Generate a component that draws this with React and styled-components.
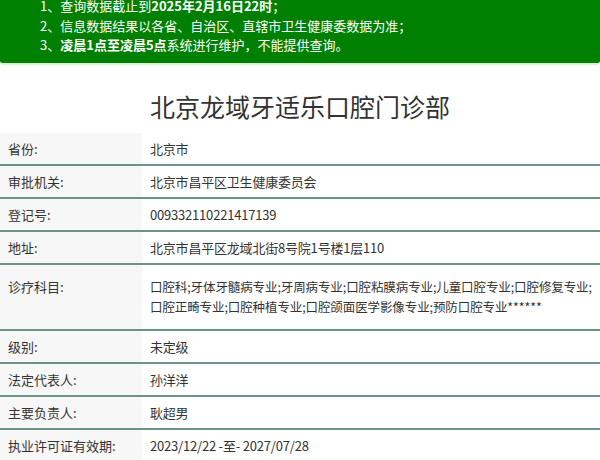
import React from "react";
import styled, { createGlobalStyle } from "styled-components";

const GlobalStyle = createGlobalStyle`
	html, body {
		margin: 0;
		padding: 0;
		background: #fff;
		overflow: hidden;
	}
	body {
		font-family: "Noto Sans CJK SC", "Noto Sans", sans-serif;
		color: #333;
	}
`;

const Page = styled.div`
	width: 600px;
	height: 460px;
	overflow: hidden;
`;

const Notice = styled.div`
	background-color: #008000;
	border-bottom: 2px solid #d6f3d6;
	border-radius: 0 0 4px 4px;
	padding: 0 0 8px 40px;
	color: #fff;
	font-size: 13px;
`;

const NoticeList = styled.ul`
	list-style: none;
	margin: -4px 0 0;
	padding: 0;
`;

const NoticeItem = styled.li`
	line-height: 19.5px;
	white-space: nowrap;
`;

const Title = styled.h1`
	margin: 0;
	padding: 26px 0 12px;
	text-align: center;
	font-size: 25px;
	font-weight: 400;
	line-height: 30px;
	color: #333;
`;

const Table = styled.div`
	display: flex;
	flex-direction: column;
	font-size: 13px;
`;

const Row = styled.div`
	display: grid;
	grid-template-columns: 142px 1fr;
	border-bottom: ${(p) => (p.last ? "none" : "2px solid #6b9486")};
`;

const Label = styled.div`
	background-color: #f7f7f7;
	padding: ${(p) => (p.tall ? "12px 8px" : "6px 8px")};
	line-height: 19px;
	color: #333;
`;

const Value = styled.div`
	padding: ${(p) => (p.tall ? "12px 8px 12px" : "6px 8px")};
	line-height: ${(p) => (p.tall ? "20px" : "19px")};
	font-size: ${(p) => (p.tall ? "12.5px" : "13px")};
	letter-spacing: ${(p) => (p.tall ? "-0.1px" : "-0.2px")};
	color: #333;
`;

const ValueLine = styled.span`
	display: block;
	white-space: nowrap;
`;

const rows = [
	["省份:", ["北京市"]],
	["审批机关:", ["北京市昌平区卫生健康委员会"]],
	["登记号:", ["009332110221417139"]],
	["地址:", ["北京市昌平区龙域北街8号院1号楼1层110"]],
	[
		"诊疗科目:",
		[
			"口腔科;牙体牙髓病专业;牙周病专业;口腔粘膜病专业;儿童口腔专业;口腔修复专业;",
			"口腔正畸专业;口腔种植专业;口腔颌面医学影像专业;预防口腔专业******",
		],
	],
	["级别:", ["未定级"]],
	["法定代表人:", ["孙洋洋"]],
	["主要负责人:", ["耿超男"]],
	["执业许可证有效期:", ["2023/12/22 -至- 2027/07/28"]],
];

const App = () => {
	return (
		<Page>
			<GlobalStyle />
			<Notice>
				<NoticeList>
					<NoticeItem>
						1、查询数据截止到<b>2025年2月16日22时</b>；
					</NoticeItem>
					<NoticeItem>2、信息数据结果以各省、自治区、直辖市卫生健康委数据为准；</NoticeItem>
					<NoticeItem>
						3、<b>凌晨1点至凌晨5点</b>系统进行维护，不能提供查询。
					</NoticeItem>
				</NoticeList>
			</Notice>
			<Title>北京龙域牙适乐口腔门诊部</Title>
			<Table>
				{rows.map(([label, lines], i) => {
					const tall = lines.length > 1;
					return (
						<Row key={label} last={i === rows.length - 1}>
							<Label tall={tall}>{label}</Label>
							<Value tall={tall}>
								{lines.map((line) => (
									<ValueLine key={line}>{line}</ValueLine>
								))}
							</Value>
						</Row>
					);
				})}
			</Table>
		</Page>
	);
};

export default App;
